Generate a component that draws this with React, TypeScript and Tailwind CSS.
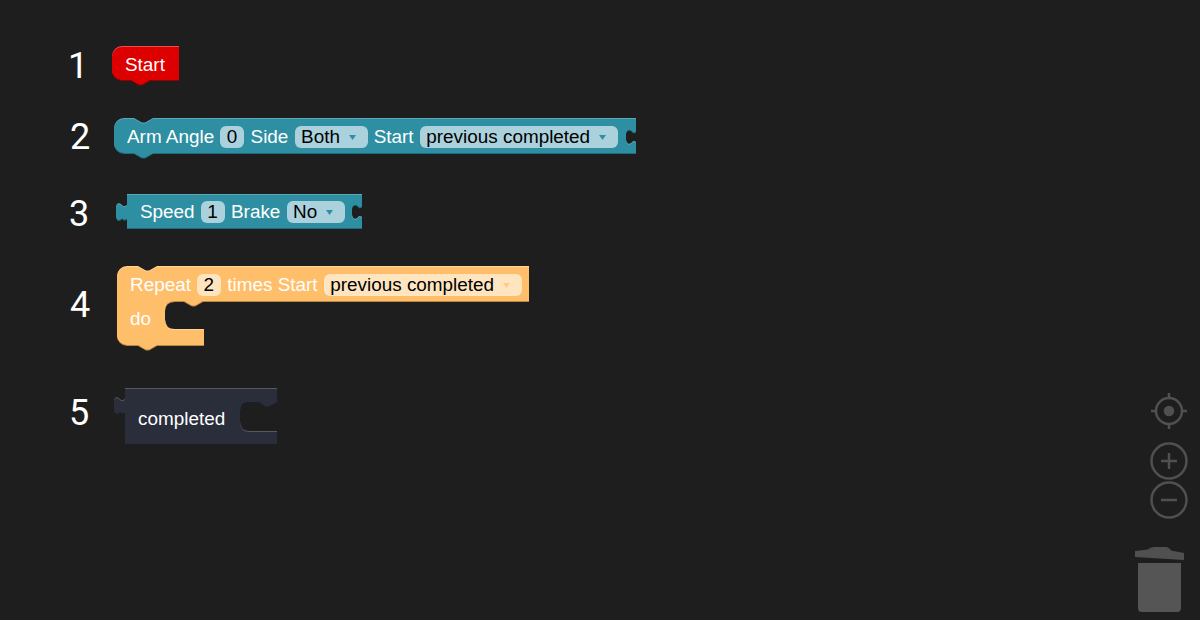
import React from "react";

const notchTop = "l7 4 q1 .6 2.5 .6 t2.5 -.6 l7 -4";
const notchRev = "l-7 4 q-1 .6 -2.5 .6 t-2.5 -.6 l-7 -4";
const tabUp = "c-1 2 -3 2 -5 0 c-2 3 -6 3 -6 -3 v-6 c0 -5 3 -6 6 -3 c1 1.5 3 1.5 5 0";
const socketDown = "c-1 2 -3 1.5 -4 0 c-2 -2 -6 -2 -6 3 v6 c0 5 4 6 6 3 c1 -1.5 3 -1.5 4 0";

function Shape({ d, fill, light, dark }: { d: string; fill: string; light: string; dark: string }) {
  return (
    <svg className="absolute left-0 top-0 overflow-visible" width="1" height="1">
      <path d={d} fill={dark} transform="translate(0 1)" />
      <path d={d} fill={light} transform="translate(0 -1)" />
      <path d={d} fill={fill} />
    </svg>
  );
}

function Field({ w, light, arrow, lift, children }: { w: string; light: string; arrow?: string; lift?: boolean; children: React.ReactNode }) {
  return (
    <span className={`${w} ${light} h-[22px] rounded-[6px] flex items-center justify-between pl-[6.5px] pr-[12px] text-black shrink-0`}>
      <span className={lift ? "" : "pt-[2px]"}>{children}</span>
      {arrow ? (
        <svg width="7" height="5" viewBox="0 0 7 5" className="mt-[1px]">
          <path d="M0 0H7L3.5 5Z" fill={arrow} />
        </svg>
      ) : null}
    </span>
  );
}

function Num({ pl, children }: { pl: string; children: React.ReactNode }) {
  return <div className={`${pl} text-white text-[36px] leading-none font-['Roboto',sans-serif] font-normal`}>{children}</div>;
}

const TEAL = { fill: "#2e8fa3", light: "#5ba8b9", dark: "#1d6d7e" };
const ORANGE = { fill: "#ffbe6a", light: "#ffd497", dark: "#b9853f" };

export default function App() {
  return (
    <div className="relative w-[1200px] h-[620px] overflow-hidden bg-[#1e1e1e] pt-[47px] font-['Liberation_Sans',Arial,sans-serif] text-[18.9px] text-white">
      {/* 1 */}
      <div className="flex items-center h-[38px]">
        <div className="w-[112px]"><Num pl="pl-[68px]">1</Num></div>
        <div className="relative self-start w-[67px] h-[34px] flex items-center pl-[13px]">
          <Shape
            d={`M0 10a10 10 0 0 1 10 -10H67V33H38${notchRev}H10a10 10 0 0 1 -10 -10Z`}
            fill="#dd0000"
            light="#e85050"
            dark="#8f0000"
          />
          <span className="relative pt-[2px]">Start</span>
        </div>
      </div>
      {/* 2 */}
      <div className="flex items-center h-[36px] mt-[34px]">
        <div className="w-[114px]"><Num pl="pl-[70px]">2</Num></div>
        <div className="relative self-start w-[522px] h-[35px] flex items-center pl-[13px] gap-[6.2px]">
          <Shape
            d={`M0 10a10 10 0 0 1 10 -10H20${notchTop}H522V12${socketDown}V34H39${notchRev}H10a10 10 0 0 1 -10 -10Z`}
            {...TEAL}
          />
          <span className="relative pt-[2px]">Arm Angle</span>
          <span className="relative"><Field w="w-[24px]" light="bg-[#abd2dc]">0</Field></span>
          <span className="relative pt-[2px]">Side</span>
          <span className="relative"><Field w="w-[73px]" light="bg-[#abd2dc]" arrow="#2e8fa3">Both</Field></span>
          <span className="relative pt-[2px]">Start</span>
          <span className="relative"><Field w="w-[198px]" light="bg-[#abd2dc]" arrow="#2e8fa3">previous completed</Field></span>
        </div>
      </div>
      {/* 3 */}
      <div className="flex items-center h-[38px] mt-[40px]">
        <div className="w-[127px]"><Num pl="pl-[69px]">3</Num></div>
        <div className="relative self-start w-[235px] h-[34px] flex items-center pl-[13px] gap-[6.2px]">
          <Shape d={`M0 0H235V11${socketDown}V33H0V23${tabUp}Z`} {...TEAL} />
          <span className="relative">Speed</span>
          <span className="relative"><Field w="w-[24px]" light="bg-[#abd2dc]" lift>1</Field></span>
          <span className="relative">Brake</span>
          <span className="relative"><Field w="w-[58px]" light="bg-[#abd2dc]" arrow="#2e8fa3" lift>No</Field></span>
        </div>
      </div>
      {/* 4 */}
      <div className="flex items-center h-[76px] mt-[34px]">
        <div className="w-[117px]"><Num pl="pl-[70px]">4</Num></div>
        <div className="relative self-start w-[412px] h-[79px] pl-[13px]">
          <Shape
            d={`M0 10a10 10 0 0 1 10 -10H21${notchTop}H412V34H86${notchRev}H58Q48 34 48 44V53Q48 63 58 63H87V78H40${notchRev}H10a10 10 0 0 1 -10 -10Z`}
            {...ORANGE}
          />
          <div className="relative flex items-center h-[35px] gap-[6.2px]">
            <span className="pt-[2px]">Repeat</span>
            <Field w="w-[24px]" light="bg-[#ffe5bf]">2</Field>
            <span className="pt-[2px]">times Start</span>
            <Field w="w-[198px]" light="bg-[#ffe5bf]" arrow="#ffcb85">previous completed</Field>
          </div>
          <div className="relative mt-[3px]">do</div>
        </div>
      </div>
      {/* 5 */}
      <div className="flex items-center h-[48px] mt-[46px]">
        <div className="w-[125px]"><Num pl="pl-[69px]">5</Num></div>
        <div className="relative self-start w-[152px] h-[56px] flex items-center pl-[13px] pt-[5px]">
          <Shape
            d={`M0 0H152V13${notchRev}H123Q115 13 115 23V33Q115 43 125 43H152V55H0V23${tabUp}Z`}
            fill="#2a2d3a"
            light="#565862"
            dark="#1c1d25"
          />
          <span className="relative">completed</span>
        </div>
      </div>

      {/* workspace controls */}
      <div className="absolute right-[12px] top-[392px] w-[38px] flex flex-col items-center">
        <svg width="38" height="38" viewBox="0 0 38 38" fill="none" stroke="#505050" strokeWidth="2.5">
          <circle cx="19" cy="19" r="13" />
          <path d="M19 1V6M19 32V37M1 19H6M32 19H37" />
          <circle cx="19" cy="19" r="5.3" fill="#505050" stroke="none" />
        </svg>
        <svg className="mt-[12px]" width="38" height="38" viewBox="0 0 38 38" fill="none" stroke="#505050" strokeWidth="2.5">
          <circle cx="19" cy="19" r="17.5" />
          <path d="M19 11V27M11 19H27" />
        </svg>
        <svg className="mt-[1px]" width="38" height="38" viewBox="0 0 38 38" fill="none" stroke="#505050" strokeWidth="2.5">
          <circle cx="19" cy="19" r="17.5" />
          <path d="M11 19H27" />
        </svg>
      </div>
      <svg className="absolute left-[1134px] top-[546px]" width="52" height="68" viewBox="0 0 52 68">
        <path d="M1 5L14 3.6Q16 1 20 1H32Q35 1 37 4.5L50 7V14L1 11Z" fill="#505050" />
        <path d="M4 17H47V62Q47 66 43 66H8Q4 66 4 62Z" fill="#555555" />
      </svg>
    </div>
  );
}
